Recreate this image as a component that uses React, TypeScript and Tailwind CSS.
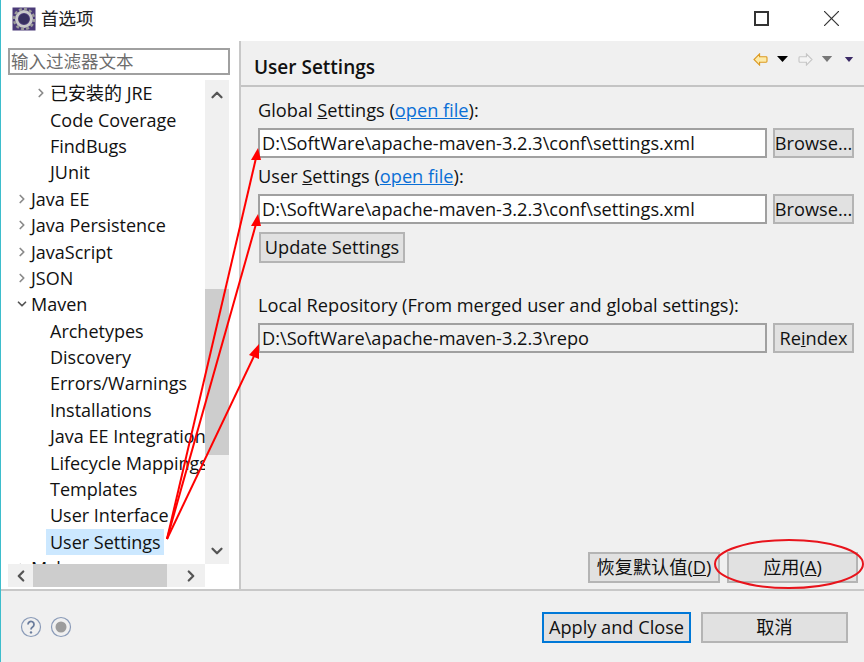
// App.tsx
import { ChevronDown, ChevronLeft, ChevronRight, ChevronUp } from "lucide-react";

const font = "font-['Open_Sans','Noto_Sans_CJK_SC',sans-serif]";

type Row = { label: string; level: 1 | 2; arrow?: "right" | "down"; selected?: boolean };

const rows: Row[] = [
  { label: "已安装的 JRE", level: 2, arrow: "right" },
  { label: "Code Coverage", level: 2 },
  { label: "FindBugs", level: 2 },
  { label: "JUnit", level: 2 },
  { label: "Java EE", level: 1, arrow: "right" },
  { label: "Java Persistence", level: 1, arrow: "right" },
  { label: "JavaScript", level: 1, arrow: "right" },
  { label: "JSON", level: 1, arrow: "right" },
  { label: "Maven", level: 1, arrow: "down" },
  { label: "Archetypes", level: 2 },
  { label: "Discovery", level: 2 },
  { label: "Errors/Warnings", level: 2 },
  { label: "Installations", level: 2 },
  { label: "Java EE Integration", level: 2 },
  { label: "Lifecycle Mappings", level: 2 },
  { label: "Templates", level: 2 },
  { label: "User Interface", level: 2 },
  { label: "User Settings", level: 2, selected: true },
  { label: "Mylyn", level: 1, arrow: "right" },
];

const TreeRow = ({ row }: { row: Row }) => (
  <div className={`flex h-[26.4px] shrink-0 items-center whitespace-nowrap ${row.level === 1 ? "pl-[5px]" : "pl-[24px]"}`}>
    <span className="flex w-[18px] shrink-0 justify-center">
      {row.arrow === "right" && <ChevronRight className="h-[14px] w-[14px] text-[#8a8a8a]" strokeWidth={3} />}
      {row.arrow === "down" && <ChevronDown className="h-[14px] w-[14px] text-[#555]" strokeWidth={3} />}
    </span>
    <span className={row.selected ? "-ml-1 flex h-[26px] items-center bg-[#cce8ff] pl-1 pr-[3px]" : ""}>{row.label}</span>
  </div>
);

const Btn = ({ className, blue, children }: { className: string; blue?: boolean; children: React.ReactNode }) => (
  <div className={`flex shrink-0 items-center justify-center border-2 bg-[#e1e1e1] whitespace-nowrap ${blue ? "border-[#0078d7]" : "border-[#b4b4b4]"} ${className}`}>
    {children}
  </div>
);

const Field = ({ value, grey }: { value: string; grey?: boolean }) => (
  <div className={`flex h-[30px] w-[509px] items-center border-2 border-[#a0a0a0] pl-[2px] whitespace-nowrap ${grey ? "bg-[#f0f0f0]" : "bg-white"}`}>
    {value}
  </div>
);

const Overlay = () => (
  <svg className="pointer-events-none absolute -left-px top-0" width="864" height="662" fill="none">
    <g stroke="#ff0000" strokeWidth="2">
      <line x1="167" y1="539" x2="256" y2="158" />
      <line x1="167" y1="539" x2="256" y2="224" />
      <line x1="167" y1="539" x2="256" y2="352" />
    </g>
    <g fill="#ff0000">
      <polygon points="258,148 251,160 261,160" />
      <polygon points="258,214 251,226 261,226" />
      <polygon points="259,344 249,355 259,359" />
    </g>
    <ellipse cx="789" cy="564" rx="74" ry="24" stroke="#e8141c" strokeWidth="2" />
  </svg>
);

export default function App() {
  return (
    <div className={`relative flex h-[662px] w-[864px] flex-col overflow-hidden border-l border-[#3dbdcc] bg-[#f0f0f0] text-[18.2px] leading-none text-[#111] ${font}`}>
      {/* title bar */}
      <div className="flex h-[41px] shrink-0 items-center bg-white pb-[4px] pl-[11px] pr-[25px]">
        <svg width="24" height="24" viewBox="0 0 24 24">
          <rect x="0.5" y="0.5" width="23" height="23" fill="#4a3a78" />
          <circle cx="12" cy="12" r="7.5" fill="none" stroke="#c9c9c9" strokeWidth="3" />
          <circle cx="12" cy="12" r="10" fill="none" stroke="#9a9a9a" strokeWidth="2.5" strokeDasharray="3 2.2" />
          <circle cx="12" cy="12" r="5" fill="#37305f" />
        </svg>
        <span className="ml-[5px] text-[17.5px] text-[#222]">首选项</span>
        <div className="ml-auto flex items-center gap-[55px]">
          <div className="h-[15px] w-[15px] border-2 border-[#333]" />
          <svg width="15" height="15" viewBox="0 0 15 15" stroke="#333" strokeWidth="1.2">
            <line x1="0" y1="0" x2="15" y2="15" />
            <line x1="15" y1="0" x2="0" y2="15" />
          </svg>
        </div>
      </div>

      <div className="flex min-h-0 flex-1">
        {/* left tree */}
        <div className="flex h-full w-[240px] shrink-0 flex-col border-r-2 border-[#c8c8c8] bg-white pl-[7px] pr-[9px] pt-[7px]">
          <div className="flex h-[27px] shrink-0 items-center border-2 border-[#a0a0a0] pl-[1px] text-[17.5px] text-[#6d6d6d]">输入过滤器文本</div>
          <div className="mt-[5px] flex h-[484px] shrink-0">
            <div className="w-[197px] overflow-hidden text-[18px]">
              {rows.map((row) => (
                <TreeRow key={row.label} row={row} />
              ))}
            </div>
            <div className="flex w-[24px] flex-col items-center bg-[#f0f0f0]">
              <ChevronUp className="mt-[6px] h-[18px] w-[18px] text-[#555]" strokeWidth={3} />
              <div className="mt-[185px] h-[166px] w-full bg-[#cdcdcd]" />
              <ChevronDown className="mt-[87px] h-[18px] w-[18px] text-[#555]" strokeWidth={3} />
            </div>
          </div>
          <div className="flex h-[23px] w-[197px] shrink-0 items-center bg-[#f0f0f0]">
            <div className="flex w-[25px] justify-center">
              <ChevronLeft className="h-[18px] w-[18px] text-[#555]" strokeWidth={3} />
            </div>
            <div className="h-full w-[134px] bg-[#cdcdcd]" />
            <div className="flex flex-1 justify-center pl-[10px]">
              <ChevronRight className="h-[18px] w-[18px] text-[#555]" strokeWidth={3} />
            </div>
          </div>
        </div>

        {/* right panel */}
        <div className="flex min-w-0 flex-1 flex-col">
          <div className="flex h-[46px] shrink-0 items-center border-b-2 border-[#c4c4c4] pl-[13px] pr-[10px]">
            <span className="translate-y-[4px] text-[19px] font-semibold">User Settings</span>
            <div className="ml-auto flex -translate-y-[4px] items-center">
              <svg width="15" height="13" viewBox="0 0 16 14">
                <path d="M7 1 1 7l6 6V10h7a1 1 0 0 0 1-1V5a1 1 0 0 0-1-1H7z" fill="#fdeaa8" stroke="#dc9a22" strokeWidth="1.2" />
              </svg>
              <svg className="ml-[9px]" width="11" height="6" viewBox="0 0 13 7"><path d="M0 0h13L6.5 7z" fill="#000" /></svg>
              <svg className="ml-[10px]" width="15" height="13" viewBox="0 0 16 14">
                <path d="M9 1l6 6-6 6V10H2a1 1 0 0 1-1-1V5a1 1 0 0 1 1-1h7z" fill="#f4f4f4" stroke="#c6c6c6" strokeWidth="1.2" />
              </svg>
              <svg className="ml-[8px]" width="12" height="6" viewBox="0 0 12 7"><path d="M0 0h12L6 7z" fill="#777" /></svg>
              <svg className="ml-[11px]" width="10" height="5" viewBox="0 0 10 6"><path d="M0 0h10L5 6z" fill="#3b2a66" /></svg>
            </div>
          </div>

          <div className="flex flex-1 flex-col pl-[17px] pr-[10px]">
            <div className="mt-[14px] h-[18px]">
              Global <u>S</u>ettings (<u className="text-[#0a6fd6]">open file</u>):
            </div>
            <div className="mt-[9px] flex gap-[6px]">
              <Field value="D:\SoftWare\apache-maven-3.2.3\conf\settings.xml" />
              <Btn className="h-[30px] w-[81px]">Browse...</Btn>
            </div>
            <div className="mt-[9px] h-[18px]">
              User <u>S</u>ettings (<u className="text-[#0a6fd6]">open file</u>):
            </div>
            <div className="mt-[9px] flex gap-[6px]">
              <Field value="D:\SoftWare\apache-maven-3.2.3\conf\settings.xml" />
              <Btn className="h-[30px] w-[81px]">Browse...</Btn>
            </div>
            <Btn className="ml-[1px] mt-[8px] h-[31px] w-[146px]">Update Settings</Btn>
            <div className="mt-[33px] h-[18px]">Local Repository (From merged user and global settings):</div>
            <div className="mt-[9px] flex gap-[6px]">
              <Field value="D:\SoftWare\apache-maven-3.2.3\repo" grey />
              <Btn className="h-[30px] w-[81px]">
                <span>Re<u>i</u>ndex</span>
              </Btn>
            </div>
            <div className="mb-[6px] mt-auto flex justify-end gap-[7px]">
              <Btn className="h-[31px] w-[132px]">
                <span>恢复默认值(<u>D</u>)</span>
              </Btn>
              <Btn className="-mr-[4px] h-[31px] w-[131px]">
                <span>应用(<u>A</u>)</span>
              </Btn>
            </div>
          </div>
        </div>
      </div>

      {/* footer */}
      <div className="flex h-[73px] shrink-0 items-start border-t-2 border-[#c8c8c8] pl-[19px] pr-[16px] pt-[21px]">
        <svg className="mt-[4px]" width="22" height="22" viewBox="0 0 22 22" fill="none">
          <circle cx="11" cy="11" r="9.5" stroke="#8a9bb8" strokeWidth="1.2" />
          <path d="M8 8.5a3 3 0 1 1 4.6 2.5c-1 .7-1.6 1.2-1.6 2.4" stroke="#6a7c9c" strokeWidth="1.8" />
          <circle cx="11" cy="16.4" r="1.2" fill="#6a7c9c" />
        </svg>
        <svg className="ml-[8px] mt-[4px]" width="22" height="22" viewBox="0 0 22 22" fill="none">
          <circle cx="11" cy="11" r="9.5" stroke="#8a9bb8" strokeWidth="1.2" />
          <circle cx="11" cy="11" r="5.5" fill="#9c9c9c" />
        </svg>
        <Btn blue className="ml-auto h-[31px] w-[149px]">Apply and Close</Btn>
        <Btn className="ml-[10px] h-[31px] w-[147px]">取消</Btn>
      </div>

      <Overlay />
    </div>
  );
}
